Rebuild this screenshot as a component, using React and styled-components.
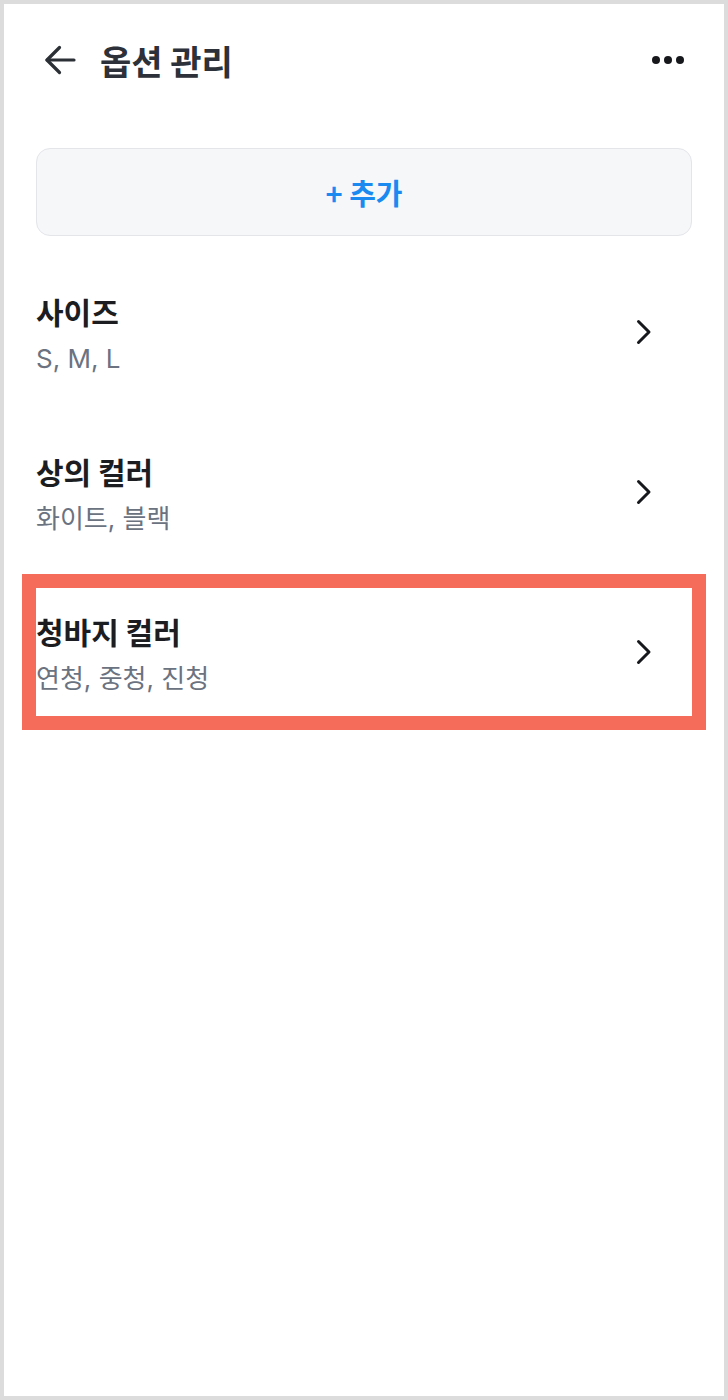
import React from "react";
import styled, { createGlobalStyle } from "styled-components";

const Global = createGlobalStyle`
  html, body { margin: 0; padding: 0; background: #ffffff; }
  body { font-family: "Inter", "Noto Sans CJK KR", sans-serif; }
  * { box-sizing: border-box; }
`;

const Frame = styled.div`
  width: 728px;
  min-height: 1400px;
  border: 4px solid #dcdcdc;
  background: #ffffff;
  display: flex;
  flex-direction: column;
`;

const Header = styled.header`
  height: 112px;
  display: flex;
  align-items: center;
  padding: 0 40px 0 40px;
`;

const IconButton = styled.button`
  border: none;
  background: none;
  padding: 0;
  margin: 0;
  display: flex;
  align-items: center;
  justify-content: center;
  cursor: pointer;
  color: ${(p) => p.$color || "#2b2f36"};
`;

const Title = styled.h1`
  margin: 0 0 0 24px;
  flex: 1;
  font-size: 34px;
  font-weight: 700;
  color: #2d3139;
  letter-spacing: 0;
  font-family: "Noto Sans CJK KR", sans-serif;
`;

const Dots = styled.div`
  display: flex;
  gap: 4px;
`;

const Dot = styled.span`
  width: 8px;
  height: 8px;
  border-radius: 50%;
  background: #17181c;
`;

const Content = styled.main`
  display: flex;
  flex-direction: column;
  gap: 32px;
  padding: 32px 32px 0 32px;
`;

const AddButton = styled.button`
  height: 88px;
  width: 100%;
  border: 1.5px solid #e3e5e9;
  border-radius: 14px;
  background: #f6f7f9;
  color: #1a8af0;
  font-family: "Noto Sans CJK KR", sans-serif;
  font-size: 29px;
  font-weight: 700;
  cursor: pointer;
`;

const Row = styled.div`
  height: 128px;
  display: flex;
  align-items: center;
  justify-content: space-between;
  padding-right: 40px;
  outline: ${(p) => (p.$highlight ? "14px solid #f56c5b" : "none")};
`;

const Texts = styled.div`
  display: flex;
  flex-direction: column;
  gap: 9px;
  padding-top: 3px;
`;

const RowTitle = styled.div`
  font-family: "Noto Sans CJK KR", sans-serif;
  font-size: 30px;
  font-weight: 700;
  color: #1b1d21;
  line-height: 1.4;
`;

const RowSub = styled.div`
  font-family: "Inter", "Noto Sans CJK KR", sans-serif;
  font-size: 26px;
  font-weight: 400;
  color: #6b7280;
  line-height: 1.4;
`;

const BackIcon = () => (
  <svg width="32" height="32" viewBox="0 0 32 32" fill="none">
    <path d="M3 16H30" stroke="currentColor" strokeWidth="3.2" strokeLinecap="round" />
    <path d="M15.5 3.5L3 16L15.5 28.5" stroke="currentColor" strokeWidth="3.2" strokeLinecap="round" strokeLinejoin="round" />
  </svg>
);

const ChevronIcon = () => (
  <svg width="16" height="26" viewBox="0 0 16 26" fill="none">
    <path d="M2.5 2.5L13 13L2.5 23.5" stroke="#17181c" strokeWidth="3" strokeLinecap="round" strokeLinejoin="round" />
  </svg>
);

const options = [
  { title: "사이즈", values: "S, M, L" },
  { title: "상의 컬러", values: "화이트, 블랙" },
  { title: "청바지 컬러", values: "연청, 중청, 진청", highlight: true },
];

export default function App() {
  return (
    <>
      <Global />
      <Frame>
        <Header>
          <IconButton aria-label="뒤로">
            <BackIcon />
          </IconButton>
          <Title>옵션 관리</Title>
          <IconButton aria-label="더보기">
            <Dots>
              <Dot />
              <Dot />
              <Dot />
            </Dots>
          </IconButton>
        </Header>
        <Content>
          <AddButton>+ 추가</AddButton>
          {options.map((o) => (
            <Row key={o.title} $highlight={o.highlight}>
              <Texts>
                <RowTitle>{o.title}</RowTitle>
                <RowSub>{o.values}</RowSub>
              </Texts>
              <ChevronIcon />
            </Row>
          ))}
        </Content>
      </Frame>
    </>
  );
}
